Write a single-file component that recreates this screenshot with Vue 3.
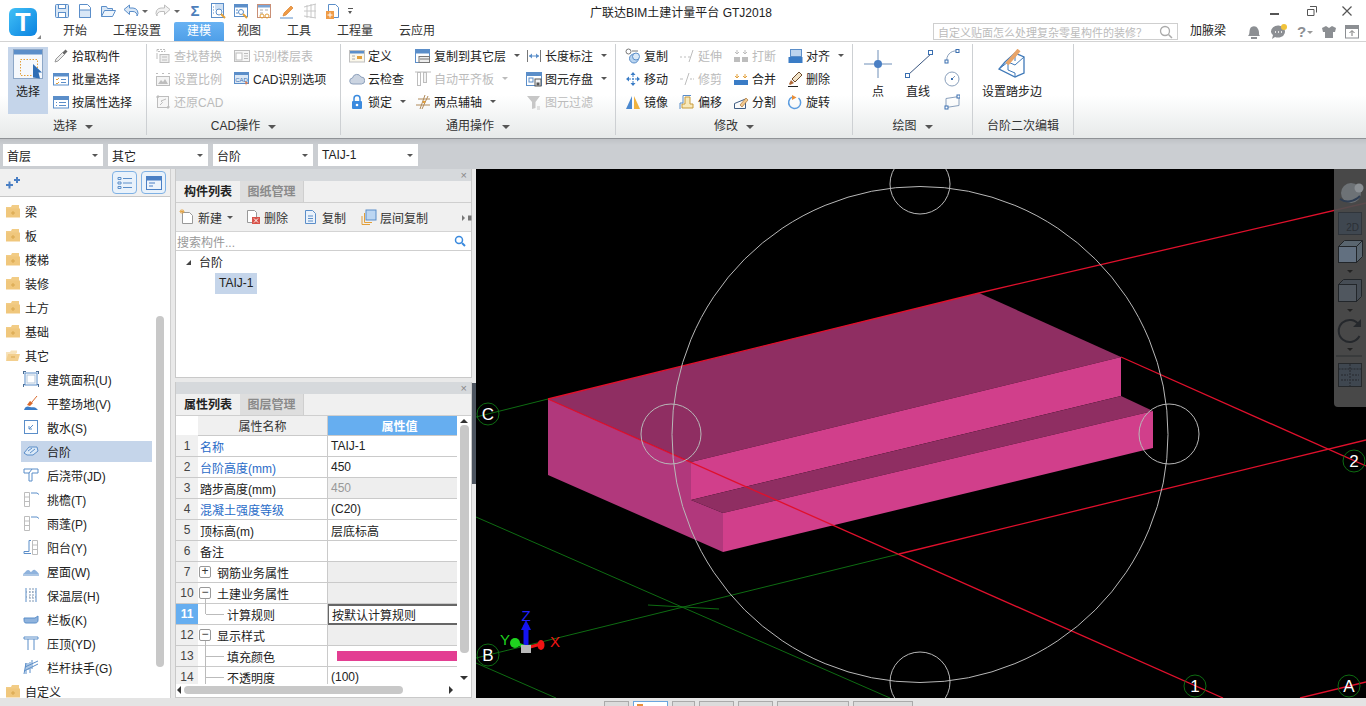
<script setup>
const S = '#5b8ec9'
const O = '#e3a03a'
const G = '#bdbdbd'

// 16x16 图标
const icons = {
  save: `<rect x="1.5" y="1.5" width="13" height="13" rx="1" fill="#d9e7f6" stroke="${S}"/><rect x="4.5" y="1.5" width="7" height="4" fill="#fff" stroke="${S}"/><rect x="4.5" y="9.5" width="7" height="5" fill="#fff" stroke="${S}"/>`,
  doc: `<path d="M2.5 1.5h8l3 3v10h-11z" fill="#fff" stroke="${S}"/><path d="M2.5 7h11v7.5h-11z" fill="#d9e7f6" stroke="${S}"/>`,
  open: `<path d="M1.5 13.5v-10h5l1 2h5v2" fill="#d9e7f6" stroke="${S}"/><path d="M1.5 13.5l3-6h11l-3 6z" fill="#eef5fc" stroke="${S}"/>`,
  undo: `<path d="M1 6.5l5.500-4.500v3h3.500a5 5 0 0 1 4 8 4 4 0 0 0-4-4.500h-3.500v3z" fill="#d9e7f6" stroke="${S}"/>`,
  redo: `<path d="M15 6.500l-5.500-4.500v3h-3.500a5 5 0 0 0-4 8 4 4 0 0 1 4-4.500h3.500v3z" fill="#f2f2f2" stroke="${G}"/>`,
  sigma: `<text x="8" y="13" font-size="15" font-weight="700" text-anchor="middle" fill="#4d7fbb" font-family="Liberation Sans">Σ</text>`,
  q1: `<rect x="1.500" y=".5" width="12" height="14" fill="#fff" stroke="${S}"/><rect x="5" y="1" width="8" height="6" fill="#cfe0f3"/><path d="M3 4h1M3 7h1M3 10h1" stroke="${S}"/><circle cx="9" cy="9" r="3" fill="#fff" stroke="${S}"/><path d="M11 11l4 4" stroke="${O}" stroke-width="2"/>`,
  q2: `<rect x="1.500" y="1.500" width="13" height="12" fill="#fff" stroke="${S}"/><rect x="2" y="2" width="12" height="2.500" fill="${S}"/><circle cx="8" cy="9" r="2.500" fill="#fff" stroke="${S}"/><path d="M10 11l4 4" stroke="${O}" stroke-width="2"/><path d="M3 7h2M3 10h2" stroke="${S}"/>`,
  q3: `<rect x="1.500" y="1.500" width="13" height="13" fill="#fff" stroke="#c98f76"/><rect x="2" y="2" width="12" height="2.500" fill="#7ba4d4"/><path d="M4 7h3M9 7h3M4 10h3" stroke="#aaa"/><circle cx="6" cy="13" r="2" fill="none" stroke="${O}"/><circle cx="11" cy="13" r="2" fill="none" stroke="${O}"/>`,
  pen: `<path d="M5 10l7-7 2 2-7 7-3 1z" fill="#ef9b47" stroke="#d9812c" stroke-width=".7"/><path d="M1 15h13" stroke="${S}"/>`,
  gridd: `<path d="M2 4l12-3M2 8h12M2 13l12 2M5 2v13M9 1v14M13 1v14" stroke="#c8c8c8" fill="none"/>`,
  docplus: `<path d="M3.500 1.500h7l3 3v10h-10z" fill="#fff" stroke="${S}"/><rect x="1" y="8" width="8" height="8" fill="#ef9b47"/><path d="M5 9.500v5M2.500 12h5" stroke="#fff"/>`,

  pick: `<path d="M2 14l1-3 6.500-6.500 2 2-6.500 6.500z" fill="#eee" stroke="#999"/><path d="M9.500 4.500l3-3 2 2-3 3z" fill="#666"/>`,
  batch: `<rect x=".5" y="2.500" width="15" height="11.500" fill="#fff" stroke="${S}"/><rect x="1" y="3" width="14" height="2.500" fill="${S}"/><path d="M3 8l1 1 2-2M3 12l1 1 2-2" stroke="${O}" fill="none"/><path d="M8 8.500h5M8 11.500h5" stroke="${S}"/>`,
  attr: `<rect x=".5" y="2.500" width="15" height="11.500" fill="#fff" stroke="${S}"/><rect x="1" y="3" width="14" height="3" fill="${S}"/><path d="M3 8.500h1M3 11.500h1" stroke="${S}"/><path d="M6 8.500h7M6 11.500h7" stroke="${S}"/>`,
  select: `<rect x=".5" y=".5" width="29" height="29" fill="#f5f8fc" stroke="#8da7c7"/><rect x="1" y="1" width="28" height="4.500" fill="#5b8ec9"/><rect x="7.500" y="10.500" width="17" height="16" fill="none" stroke="${O}" stroke-dasharray="1.500 1.500"/><path d="M20 15l9 8.500h-3.500l1.500 6-7-1z" fill="#2f6eb5"/>`,

  find: `<path d="M2 1.500h8v2H2z" fill="none" stroke="${G}" stroke-dasharray="2 1"/><rect x="5" y="6.500" width="9" height="8" fill="#eee" stroke="${G}"/><path d="M7 9h5M7 12h5M2 5v6" stroke="${G}"/>`,
  floor: `<rect x=".5" y="2.500" width="15" height="11" fill="#f6f6f6" stroke="${G}"/><rect x="2" y="5" width="6" height="7" fill="#fff" stroke="${G}"/><path d="M10 5.500h4M10 8h4M10 10.500h4" stroke="${G}"/>`,
  scale: `<path d="M1 2.500h2M7 2.500h2M13 2.500h2" stroke="${G}"/><rect x="1.500" y="5.500" width="13" height="9" fill="#f4f4f4" stroke="${G}"/><path d="M3 13l3-4 2 2 2-3 3 5z" fill="${G}"/>`,
  cadopt: `<rect x=".5" y="1.500" width="14" height="11" fill="#dbe8f6" stroke="${S}"/><rect x="1" y="2" width="13" height="2" fill="${S}"/><text x="7.500" y="10.500" font-size="6" text-anchor="middle" fill="#3a6fb0" font-family="Liberation Sans">CAD</text><path d="M11 10l3.500 2-2 .8-.5 2z" fill="#e27a4a"/>`,
  restore: `<rect x="2.500" y="2.500" width="11" height="11" fill="#f6f6f6" stroke="${G}"/><path d="M1 3h3M3 1v3M12 13h3M13 12v3" stroke="${G}"/><path d="M11 5L6 7l1.500 1.500L5 11" stroke="${G}" fill="none"/>`,

  define: `<rect x=".5" y="2.500" width="15" height="11.500" fill="#fbf7ea" stroke="#bfbfbf"/><rect x="1" y="3" width="14" height="2.500" fill="${S}"/><rect x="8" y="8" width="5" height="3" fill="${O}"/><path d="M3 8h3M3 11h3" stroke="#aaa"/>`,
  cloud: `<path d="M4 13a3 3 0 0 1-.5-6A4.500 4.500 0 0 1 12 6a3.500 3.500 0 0 1 .5 7z" fill="#cbd4e1" stroke="#8da0bb"/>`,
  lock: `<rect x="3" y="7" width="10" height="8" rx="1" fill="#3a8ade"/><path d="M5 7V4.500a3 3 0 0 1 6 0V7" fill="none" stroke="#3a8ade" stroke-width="1.500"/><circle cx="8" cy="11" r="1.300" fill="#fff"/>`,
  copyfl: `<rect x=".5" y="1.500" width="14" height="13" fill="#fff" stroke="${S}"/><rect x="1" y="2" width="13" height="3.500" fill="${S}"/><rect x="4" y="8.500" width="10.500" height="6" fill="#eee" stroke="#777"/><path d="M5 11h9" stroke="#777"/>`,
  align: `<rect x="2.500" y="1.500" width="3" height="13" fill="none" stroke="${G}"/><rect x="8.500" y="1.500" width="3" height="10" fill="#f2f2f2" stroke="${G}"/><path d="M0 1h16" stroke="${G}"/>`,
  twopt: `<path d="M1 11h14M3 5h12M10 1L5 15M13 2L7 15" stroke="#b08a5a" fill="none"/><circle cx="9" cy="8" r="1.300" fill="${O}"/>`,
  dim: `<path d="M1.500 2v12M14.500 2v12" stroke="#777"/><path d="M3 8h10" stroke="${S}"/><path d="M6 5.500L3 8l3 2.500zM10 5.500L13 8l-3 2.500z" fill="${S}"/>`,
  store: `<rect x=".5" y="1.500" width="15" height="13" fill="#fff" stroke="${S}"/><rect x="1" y="2" width="14" height="3" fill="${S}"/><rect x="3" y="7" width="4" height="4" fill="none" stroke="${S}"/><rect x="9" y="8" width="6" height="7" fill="#f4f4f4" stroke="#555"/><rect x="10.500" y="11.500" width="3" height="3" fill="#555"/>`,
  filter: `<path d="M1 2h13L9.500 8v6L6 15V8z" fill="#c7c7c7"/><path d="M11 13h3M11 15h3" stroke="#c7c7c7"/>`,

  copy: `<circle cx="3.500" cy="3.500" r="2.500" fill="#fff" stroke="#777"/><circle cx="9" cy="10.500" r="4.500" fill="#b9d4f0" stroke="${S}"/><circle cx="11" cy="8.500" r="3.500" fill="#dbe9f7" stroke="${S}"/><path d="M7 3h6" stroke="#777"/>`,
  move: `<path d="M8 1l2.500 3h-5zM8 15l2.500-3h-5zM1 8l3-2.500v5zM15 8l-3-2.500v5z" fill="#3a7cc6"/><path d="M4 8h8M8 4v8" stroke="#3a7cc6" stroke-dasharray="2 1"/>`,
  mirror: `<path d="M7 2v13H1z" fill="#4a88cf"/><path d="M9 2v13h6z" fill="#f0b23e"/>`,
  extend: `<path d="M1 9h2M5 9h2" stroke="${G}"/><path d="M9 9h2M14 2l-4 12" stroke="${G}" fill="none"/>`,
  trim: `<path d="M1 8h3M11 8h2M14 8h1" stroke="${G}"/><path d="M10 2L6 14" stroke="${G}"/>`,
  offset: `<path d="M3 14v-4h3V3h5v7h3v4z" fill="#f8e9bb" stroke="#c89b3c"/><path d="M1 15V9h3V1.500h8" fill="none" stroke="${S}"/>`,
  brk: `<path d="M1 7h5v-2H1zM9 7h5v-2H9z" fill="#fff"/><rect x="1" y="9" width="6" height="5" fill="${G}"/><rect x="9" y="9" width="6" height="5" fill="${G}"/><path d="M4 2v4M2 4l2 2 2-2M12 2v4M10 4l2 2 2-2" stroke="${G}" fill="none"/>`,
  merge: `<rect x="1" y="9" width="14" height="5" fill="#3a7cc6"/><path d="M4 3v4M2 5l2 2 2-2M12 3v4M10 5l2 2 2-2" stroke="${O}" fill="none"/>`,
  split: `<path d="M1.500 9.500l11-4.500v9.500h-11z" fill="none" stroke="#3e5c82"/><path d="M7 11l6-7 2 2-6 7z" fill="#f3c98f" stroke="#a7763a" stroke-width=".7"/>`,
  alignr: `<rect x="1.500" y="9" width="14" height="6" fill="#3a7cc6"/><rect x="3.500" y="1.500" width="11" height="7" fill="#bcd4ee" stroke="${S}"/>`,
  erase: `<path d="M2 13l2-4 3 3-4 2z" fill="#b06a3a"/><path d="M5 8l7-7 3 3-7 7z" fill="#f1e2c7" stroke="#6b4a2c"/><path d="M1 15.500h10" stroke="#222"/>`,
  rotate: `<path d="M11.500 4A6 6 0 1 1 5 3.200" fill="none" stroke="#5c9de0" stroke-width="1.500"/><path d="M5 1l4.500 2.500L5 6z" fill="#e88f3a"/>`,

  point: `<path d="M15 1v28M1 15h28" stroke="#6e8fb8"/><circle cx="15" cy="15" r="4" fill="#4a7fc4"/>`,
  line: `<path d="M5 26L29 4" stroke="#3a5680"/><rect x="2.500" y="24.500" width="4" height="4" fill="#fff" stroke="#3a6fb0"/><rect x="25.500" y="1.500" width="4" height="4" fill="#fff" stroke="#3a6fb0"/>`,
  arc: `<path d="M3 14A9 9 0 0 1 13 3" fill="none" stroke="#8aa0bc"/><rect x="1" y="12" width="3" height="3" fill="#fff" stroke="#3a6fb0"/><rect x="12" y="1.500" width="3" height="3" fill="#fff" stroke="#3a6fb0"/>`,
  circle: `<circle cx="8" cy="8" r="7" fill="none" stroke="#8aa0bc"/><path d="M8 8l3-3" stroke="#8aa0bc"/><rect x="7" y="7" width="2" height="2" fill="#3a6fb0"/>`,
  rect: `<path d="M2 4.500l13-2v9l-13 2z" fill="none" stroke="#8aa0bc"/><rect x="1" y="12" width="3" height="3" fill="#fff" stroke="#3a6fb0"/><rect x="13" y="1" width="3" height="3" fill="#fff" stroke="#3a6fb0"/>`,
  stepset: `<path d="M8 13l10-9 9 4v16l-9 4L2 20z" fill="#fff" stroke="#3f79b8" stroke-width="1.300"/><path d="M2 20l9-7 7 3 9-8M11 13v8l7 3v4M18 4v8" fill="none" stroke="#3f79b8"/><path d="M10 15L22 1" stroke="#e8a468" stroke-width="4"/>`,

  // 树
  folder: `<path d="M1 4h5l1-2h7v11H1z" fill="#f2cc85"/><path d="M1 5.500h14v9H1z" fill="#f0c77c"/><path d="M8 8v4M6 10h4" stroke="#d9a74e"/>`,
  folderopen: `<path d="M1 13V5h4l1-1.500h6V6" fill="#f7e2ba"/><path d="M1 14l2-7h12l-2 7z" fill="#f3cf8e"/><path d="M6 10h4" stroke="#d9a74e"/>`,
  area: `<path d="M0 .5h3M0 13.500h3M13 .5h3M13 13.500h3M.5 0v3M.5 13v3M15.500 0v3M15.500 13v3" stroke="#4b6d94"/><rect x="2" y="2" width="12" height="12" fill="#fff" stroke="${S}"/><rect x="4" y="4" width="8" height="8" fill="#fff" stroke="#b4c7dc"/>`,
  level: `<path d="M1 15c1-4 4-4 6-3s5-1 8 3z" fill="#3a7cc6"/><path d="M4 10l3-4 3 2-3 3z" fill="#d9692b"/><path d="M9 7l5-6" stroke="#d9692b"/>`,
  apron: `<rect x="1.500" y="1.500" width="13" height="13" fill="#fff" stroke="${S}"/><path d="M10 6L6 10M6 7v3h3" fill="none" stroke="${S}"/>`,
  stair: `<path d="M1 10l5-6 8 0 1 4-5 4-6 0z" fill="#dbe9f7" stroke="${S}"/><path d="M5 8l4-3M7 10l5-4" stroke="${S}"/>`,
  jd: `<path d="M1 2h14v4H9v8H6V6H1z" fill="#fff" stroke="${S}"/><path d="M6 6l3-4" stroke="${S}"/>`,
  eave: `<path d="M1.500 1.500h5v14h-5zM1.500 6h5M1.500 10.500h5" fill="#fff" stroke="${G}"/><path d="M8 2h6l2 1.500" fill="none" stroke="${S}"/>`,
  balcony: `<path d="M9.500 1.500h5v14h-5zM9.500 6h5M9.500 10.500h5" fill="#fff" stroke="${G}"/><path d="M8 1.500H6v11H1v2h7" fill="none" stroke="${S}"/>`,
  roof: `<path d="M0 11c2-1 3-4 5-4s2 2 3 2 2-3 4-2 3 3 4 4z" fill="#8fb3dd"/><path d="M0 12h16" stroke="${S}"/>`,
  insul: `<path d="M3 1v14M13 1v14" stroke="${S}"/><path d="M7 1v14M10 1v14" stroke="#7f95b0" stroke-dasharray="2 1"/><path d="M3 5h10M3 10h10" stroke="#7f95b0" stroke-dasharray="1 2"/>`,
  rail: `<path d="M1 7h11l3-2v4c0 2-1 3-3 3H3c-2 0-2-2-2-5z" fill="#8fb3dd" stroke="${S}"/>`,
  coping: `<path d="M1 2h14v2H1zM5 4v11M11 4v11" fill="#fff" stroke="${S}"/>`,
  handrail: `<path d="M1 15l2-11v11M5 11V4M7 14V3M9 10V1M1 12l14-7M2 8l13-6" fill="none" stroke="${S}"/>`,

  // 构件工具栏
  add: `<path d="M3.500 3.500h7l3 3v8h-10z" fill="#fff" stroke="#999"/><path d="M3 0v5M0.500 2.500h5M1 1l4 3M5 1L1 4" stroke="${O}" stroke-width=".8"/>`,
  del: `<path d="M2.500 1.500h7l2 2v10h-9z" fill="#fff" stroke="#999"/><rect x="7" y="8" width="8" height="7" fill="#d8534a"/><path d="M9 9.500l4 4M13 9.500l-4 4" stroke="#fff"/>`,
  dup: `<path d="M2.500 1.500h7l3 3v10h-10z" fill="#eaf2fb" stroke="${S}"/><path d="M5 7h5M5 9.500h5M5 12h5" stroke="${S}"/>`,
  floorcopy: `<rect x="5" y="1" width="10" height="10" fill="#bcd6f2" stroke="${S}"/><path d="M3.500 4v9.500H11M1 7v8.500h8" fill="none" stroke="${O}"/>`
}

const groups = [
  {
    label: '选择', cls: 'g1', caret: true,
    bigs: [{ icon: 'select', text: '选择', active: true }],
    cols: [{
      w: 'w90',
      items: [{ icon: 'pick', text: '拾取构件' }, { icon: 'batch', text: '批量选择' }, { icon: 'attr', text: '按属性选择' }]
    }]
  },
  {
    label: 'CAD操作', cls: 'g2', caret: true, bigs: [],
    cols: [
      { w: 'w79', items: [{ icon: 'find', text: '查找替换', off: true }, { icon: 'scale', text: '设置比例', off: true }, { icon: 'restore', text: '还原CAD', off: true }] },
      { w: 'w100', items: [{ icon: 'floor', text: '识别楼层表', off: true }, { icon: 'cadopt', text: 'CAD识别选项' }] }
    ]
  },
  {
    label: '通用操作', cls: 'g3', caret: true, bigs: [],
    cols: [
      { w: 'w66', items: [{ icon: 'define', text: '定义' }, { icon: 'cloud', text: '云检查' }, { icon: 'lock', text: '锁定', more: true }] },
      { w: 'w111', items: [{ icon: 'copyfl', text: '复制到其它层', more: true }, { icon: 'align', text: '自动平齐板', off: true, more: true }, { icon: 'twopt', text: '两点辅轴', more: true }] },
      { w: 'w85', items: [{ icon: 'dim', text: '长度标注', more: true }, { icon: 'store', text: '图元存盘', more: true }, { icon: 'filter', text: '图元过滤', off: true }] }
    ]
  },
  {
    label: '修改', cls: 'g4', caret: true, bigs: [],
    cols: [
      { w: 'w54', items: [{ icon: 'copy', text: '复制' }, { icon: 'move', text: '移动' }, { icon: 'mirror', text: '镜像' }] },
      { w: 'w54', items: [{ icon: 'extend', text: '延伸', off: true }, { icon: 'trim', text: '修剪', off: true }, { icon: 'offset', text: '偏移' }] },
      { w: 'w54', items: [{ icon: 'brk', text: '打断', off: true }, { icon: 'merge', text: '合并' }, { icon: 'split', text: '分割' }] },
      { w: 'w60', items: [{ icon: 'alignr', text: '对齐', more: true }, { icon: 'erase', text: '删除' }, { icon: 'rotate', text: '旋转' }] }
    ]
  },
  {
    label: '绘图', cls: 'g5', caret: true,
    bigs: [{ icon: 'point', text: '点' }, { icon: 'line', text: '直线' }],
    cols: [{ w: 'w18', items: [{ icon: 'arc' }, { icon: 'circle' }, { icon: 'rect' }] }]
  },
  {
    label: '台阶二次编辑', cls: 'g6', caret: false,
    bigs: [{ icon: 'stepset', text: '设置踏步边', wide: true }],
    cols: []
  }
]

const quick = ['save', 'doc', 'open', 'undo', 'c', 'redo', 'c', 'sigma', 'q1', 'q2', 'q3', 'pen', 'gridd', 'docplus']
const tabs = ['开始', '工程设置', '建模', '视图', '工具', '工程量', '云应用']
const combos = ['首层', '其它', '台阶', 'TAIJ-1']

const tree = [
  { icon: 'folder', text: '梁' }, { icon: 'folder', text: '板' }, { icon: 'folder', text: '楼梯' },
  { icon: 'folder', text: '装修' }, { icon: 'folder', text: '土方' }, { icon: 'folder', text: '基础' },
  { icon: 'folderopen', text: '其它' },
  { icon: 'area', text: '建筑面积(U)', sub: true }, { icon: 'level', text: '平整场地(V)', sub: true },
  { icon: 'apron', text: '散水(S)', sub: true }, { icon: 'stair', text: '台阶', sub: true, on: true },
  { icon: 'jd', text: '后浇带(JD)', sub: true }, { icon: 'eave', text: '挑檐(T)', sub: true },
  { icon: 'eave', text: '雨蓬(P)', sub: true }, { icon: 'balcony', text: '阳台(Y)', sub: true },
  { icon: 'roof', text: '屋面(W)', sub: true }, { icon: 'insul', text: '保温层(H)', sub: true },
  { icon: 'rail', text: '栏板(K)', sub: true }, { icon: 'coping', text: '压顶(YD)', sub: true },
  { icon: 'handrail', text: '栏杆扶手(G)', sub: true }, { icon: 'folder', text: '自定义' }
]

const tools = [
  { icon: 'add', text: '新建', more: true }, { icon: 'del', text: '删除' },
  { icon: 'dup', text: '复制' }, { icon: 'floorcopy', text: '层间复制' }
]

const rows = [
  { n: '1', name: '名称', val: 'TAIJ-1', blue: true },
  { n: '2', name: '台阶高度(mm)', val: '450', blue: true },
  { n: '3', name: '踏步高度(mm)', val: '450', shade: true, dim: true },
  { n: '4', name: '混凝土强度等级', val: '(C20)', blue: true },
  { n: '5', name: '顶标高(m)', val: '层底标高' },
  { n: '6', name: '备注', val: '' },
  { n: '7', name: '钢筋业务属性', val: '', shade: true, box: '+' },
  { n: '10', name: '土建业务属性', val: '', shade: true, box: '−', open: true },
  { n: '11', name: '计算规则', val: '按默认计算规则', child: 'last', edit: true, cur: true },
  { n: '12', name: '显示样式', val: '', shade: true, box: '−', open: true },
  { n: '13', name: '填充颜色', val: '', child: 'mid', swatch: true },
  { n: '14', name: '不透明度', val: '(100)', child: 'mid' }
]

const bottomTabs = [25, 35, 23, 35, 35, 72, 60]

// 画布上的轴号
const axisMarks = [
  { t: 'C', x: 488, y: 414 }, { t: '2', x: 1354, y: 461 }, { t: '1', x: 1195, y: 686 },
  { t: 'A', x: 1349, y: 686 }, { t: 'B', x: 488, y: 655 }
]
const rims = [[920, 184], [671, 434], [1169, 434], [920, 682]]
</script>

<template>
  <div class="app">
    <header class="top">
      <div class="logo-cell">
        <div class="logo">T</div>
        <i class="logo-mark"></i>
      </div>
      <div class="top-main">
        <div class="row-a">
          <div class="quick">
            <template v-for="(q, i) in quick" :key="i">
              <i v-if="q === 'c'" class="qcaret"></i>
              <svg v-else class="i16" viewBox="0 0 16 16" v-html="icons[q]"></svg>
            </template>
            <span class="qmenu"></span>
          </div>
          <div class="title">广联达BIM土建计量平台 GTJ2018</div>
          <div class="win">
            <svg width="12" height="12" viewBox="0 0 12 12"><path d="M1 9h9" stroke="#555" stroke-width="2" /></svg>
            <svg width="12" height="12" viewBox="0 0 12 12"><path d="M4 1.500h6.500v6M1.500 4.500h6.500v6H1.500z" fill="#fff" stroke="#555" /></svg>
            <svg width="12" height="12" viewBox="0 0 12 12"><path d="M1.500 1.500l9 9M10.500 1.500l-9 9" stroke="#555" stroke-width="1.200" /></svg>
          </div>
        </div>
        <div class="row-b">
          <nav class="tabs">
            <span v-for="t in tabs" :key="t" class="tab" :class="{ 'tab--on': t === '建模' }">{{ t }}</span>
          </nav>
          <div class="search">
            <span>自定义贴面怎么处理复杂零星构件的装修？</span>
            <svg width="14" height="14" viewBox="0 0 14 14"><circle cx="6" cy="6" r="4.500" fill="none" stroke="#aaa" stroke-width="1.300" /><path d="M9.500 9.500l3.500 3.500" stroke="#aaa" stroke-width="1.500" /></svg>
          </div>
          <span class="hint">加腋梁</span>
          <div class="tray">
            <svg width="14" height="16" viewBox="0 0 14 16"><path d="M1 12c2-2 1-4 2-7s6-4 8 0 0 5 2 7z" fill="#8c8f93" /><rect x="4" y="13" width="6" height="2" fill="#8c8f93" /></svg>
            <svg width="18" height="16" viewBox="0 0 18 16"><path d="M1 8a7 6 0 1 1 4 5l-3 2 1-4a6 6 0 0 1-2-3z" fill="#8c8f93" /><path d="M5 8h1M8 8h1M11 8h1" stroke="#fff" stroke-width="1.500" /><circle cx="14" cy="3" r="3" fill="#f0c23a" /></svg>
            <span class="help">?<i></i></span>
            <svg width="14" height="14" viewBox="0 0 14 14"><path d="M4 1L0 3l1 4h2v6h8V7h2l1-4-4-2-3 2z" fill="#8c8f93" /></svg>
            <svg width="14" height="14" viewBox="0 0 14 14"><rect x=".5" y=".5" width="13" height="12.500" fill="#fff" stroke="#8c8f93" /><rect x="1" y="1" width="12" height="3" fill="#8c8f93" /><path d="M7 11V6M4.500 8L7 5.500 9.500 8" fill="none" stroke="#777" /></svg>
          </div>
        </div>
      </div>
    </header>

    <section class="ribbon">
      <div v-for="g in groups" :key="g.label" class="group" :class="g.cls">
        <div class="group-body">
          <div v-for="b in g.bigs" :key="b.text" class="big" :class="{ 'big--on': b.active, 'big--wide': b.wide }">
            <svg class="i30" viewBox="0 0 30 30" v-html="icons[b.icon]"></svg>
            <span>{{ b.text }}</span>
          </div>
          <div v-for="(c, ci) in g.cols" :key="ci" class="col" :class="c.w">
            <div v-for="(it, ii) in c.items" :key="ii" class="item" :class="{ 'item--off': it.off }">
              <svg class="i16" viewBox="0 0 16 16" v-html="icons[it.icon]"></svg>
              <span v-if="it.text">{{ it.text }}</span>
              <i v-if="it.more" class="caret"></i>
            </div>
          </div>
        </div>
        <div class="group-label">{{ g.label }}<i v-if="g.caret" class="caret caret--lg"></i></div>
      </div>
    </section>

    <section class="picker">
      <div v-for="c in combos" :key="c" class="combo">
        <span>{{ c }}</span>
        <i class="caret"></i>
      </div>
    </section>

    <main class="work">
      <aside class="nav">
        <div class="nav-bar">
          <svg class="i16" viewBox="0 0 16 16"><path d="M1 10h7M4.500 6.500v7M9 5h6M12 2v6" stroke="#4a7fc4" stroke-width="2" /></svg>
          <span class="nav-btns">
            <span class="nav-btn">
              <svg class="i16" viewBox="0 0 16 16"><path d="M1 2.500h3v2H1zM1 7h3v2H1zM1 11.500h3v2H1z" fill="none" stroke="#5b8ec9" /><path d="M6 3.500h9M6 8h9M6 12.500h9" stroke="#5b8ec9" /></svg>
            </span>
            <span class="nav-btn">
              <svg class="i16" viewBox="0 0 16 16"><rect x=".5" y="1.500" width="15" height="13" fill="#eef4fb" stroke="#4a7fc4" /><rect x="1" y="2" width="14" height="3.500" fill="#4a7fc4" /><path d="M3 8h6M3 11h4" stroke="#4a7fc4" /></svg>
            </span>
          </span>
        </div>
        <div class="nav-tree">
          <div v-for="n in tree" :key="n.text" class="node" :class="{ 'node--sub': n.sub, 'node--on': n.on }">
            <svg class="i16" viewBox="0 0 16 16" v-html="icons[n.icon]"></svg>
            <span>{{ n.text }}</span>
          </div>
          <i class="nav-thumb"></i>
        </div>
      </aside>

      <div class="mid">
        <div class="panels">
          <section class="panel panel--list">
            <div class="panel-head">×</div>
            <div class="panel-tabs">
              <span class="ptab ptab--on">构件列表</span>
              <span class="ptab">图纸管理</span>
            </div>
            <div class="ptools">
              <span v-for="t in tools" :key="t.text" class="ptool">
                <svg class="i16" viewBox="0 0 16 16" v-html="icons[t.icon]"></svg>
                {{ t.text }}
                <i v-if="t.more" class="caret"></i>
              </span>
              <span class="pmore"></span>
            </div>
            <div class="psearch">
              <span>搜索构件...</span>
              <svg width="12" height="12" viewBox="0 0 12 12"><circle cx="5" cy="5" r="3.500" fill="none" stroke="#3a8ade" stroke-width="1.500" /><path d="M8 8l3 3" stroke="#3a8ade" stroke-width="2" /></svg>
            </div>
            <div class="ptree">
              <div class="pt-root"><i></i>台阶</div>
              <div class="pt-leaf"><span>TAIJ-1</span></div>
            </div>
          </section>

          <section class="panel panel--props">
            <div class="panel-head">×</div>
            <div class="panel-tabs">
              <span class="ptab ptab--on">属性列表</span>
              <span class="ptab">图层管理</span>
            </div>
            <div class="props">
              <div class="table">
                <div class="tr tr--head">
                  <span class="cell cell--no cell--blank"></span>
                  <span class="cell cell--hname">属性名称</span>
                  <span class="cell cell--hval">属性值</span>
                </div>
                <div v-for="r in rows" :key="r.n" class="tr">
                  <span class="cell cell--no" :class="{ 'cell--cur': r.cur }">{{ r.n }}</span>
                  <span class="cell cell--name" :class="{ 'is-blue': r.blue, 'has-box': r.box, 'is-child': r.child, 'is-open': r.open, 'is-last': r.child === 'last' }">
                    <i v-if="r.box" class="box">{{ r.box }}</i>{{ r.name }}
                  </span>
                  <span class="cell cell--val" :class="{ 'is-shade': r.shade, 'is-dim': r.dim, 'is-edit': r.edit }">
                    <i v-if="r.swatch" class="swatch"></i>{{ r.val }}
                  </span>
                </div>
              </div>
              <div class="vbar">
                <i class="arr arr--up"></i>
                <i class="vthumb"></i>
                <i class="arr arr--down"></i>
              </div>
            </div>
            <div class="hbar">
              <i class="arr arr--left"></i>
              <i class="hthumb"></i>
              <i class="arr arr--right"></i>
            </div>
          </section>
        </div>
        <div class="gutter"><i class="handle"></i></div>
      </div>

      <div class="canvas">
        <svg class="scene" viewBox="476 169 890 529">
          <g fill="none" stroke="#0e6c12">
            <path d="M476 417L548 399" />
            <path d="M476 517L890 698" />
            <path d="M476 663L556 698" />
            <path d="M476 658L899 554" />
            <path d="M648 605L719 609" />
          </g>
          <polygon points="548,399 979,293 1121,357 691,462" fill="#8f2e62" />
          <polygon points="691,462 1121,357 1121,396 691,500" fill="#d13f8b" />
          <polygon points="691,500 1121,396 1153,411 723,513" fill="#8f2e62" />
          <polygon points="723,513 1153,411 1153,448 723,552" fill="#d13f8b" />
          <polygon points="548,399 691,462 691,500 723,513 723,552 548,475" fill="#b1387c" />
          <g fill="none" stroke="#e0102c" stroke-width="1.300">
            <path d="M548 399L979 293L1366 203" />
            <path d="M548 399L1223 698" />
            <path d="M1121 357L1366 466" />
            <path d="M899 554L1366 440" />
            <path d="M1300 698L1366 682" />
          </g>
          <g fill="none" stroke="#b8b8b8">
            <circle cx="920" cy="434.500" r="248" />
            <circle v-for="r in rims" :key="r[0] + '-' + r[1]" :cx="r[0]" :cy="r[1]" r="30" />
          </g>
          <g v-for="m in axisMarks" :key="m.t">
            <circle :cx="m.x" :cy="m.y" r="11" fill="none" stroke="#0e6c12" />
            <text :x="m.x" :y="m.y + 6" class="mark">{{ m.t }}</text>
          </g>
          <!-- 坐标轴 -->
          <path d="M526 625v20" stroke="#1414f0" stroke-width="5" />
          <path d="M526 620l-5 10h10z" fill="#1414f0" />
          <path d="M515 643L526 647" stroke="#1fd41f" stroke-width="3" />
          <circle cx="515" cy="643" r="5" fill="#1fd41f" />
          <path d="M530 647L541 644" stroke="#f01414" stroke-width="3" />
          <ellipse cx="541" cy="645" rx="3.500" ry="5" fill="#f01414" />
          <rect x="521" y="645" width="10" height="8" fill="#b9b9b9" />
          <text x="526" y="621" class="axis axis--z">Z</text>
          <text x="505" y="645" class="axis axis--y">Y</text>
          <text x="555" y="647" class="axis axis--x">X</text>
        </svg>

        <div class="viewbar">
          <svg width="32" height="238" viewBox="0 0 32 238">
            <circle cx="17" cy="24" r="10" fill="#6d7276" />
            <circle cx="25" cy="19" r="4.500" fill="#8a8f93" />
            <path d="M6 30c6 4 14 3 20-3" fill="none" stroke="#2e3d52" stroke-width="2" />
            <rect x="4.500" y="43.500" width="23" height="22" fill="#3f4750" stroke="#30353b" />
            <text x="25" y="62" class="bar-text">2D</text>
            <path d="M4.500 77.500l6-6h18v16l-6 6h-18z" fill="#5a6670" stroke="#22262a" />
            <rect x="4.500" y="77.500" width="18" height="16" fill="#627080" stroke="#22262a" />
            <path d="M22.500 77.500l6-6" stroke="#22262a" />
            <path d="M13 101l3 3 3-3z" fill="#222" />
            <path d="M4.500 115.500l5-5h18v17l-5 5h-18z" fill="#464d55" stroke="#22262a" />
            <rect x="4.500" y="115.500" width="18" height="17" fill="#50575f" stroke="#22262a" />
            <path d="M13 140l3 3 3-3z" fill="#222" />
            <path d="M25 156a11 11 0 1 0 .5 11" fill="none" stroke="#25282c" stroke-width="2" />
            <path d="M27 150v8h-8z" fill="#25282c" />
            <path d="M13 179l3 3 3-3z" fill="#222" />
            <path d="M2 187h26" stroke="#2b2e31" />
            <rect x="4.500" y="194.500" width="23" height="23" fill="#3f4750" stroke="#26292c" />
            <path d="M4.500 200h23M16 195v22M7 206h7M18 206h7M7 211h7M18 211h7" stroke="#26292c" stroke-dasharray="2 1" />
          </svg>
        </div>
      </div>
    </main>

    <footer class="bottom">
      <span v-for="(w, i) in bottomTabs" :key="i" class="btab" :class="{ 'btab--on': i === 1 }" :style="{ width: w + 'px' }"></span>
    </footer>
  </div>
</template>

<style>
html, body {
  margin: 0;
  height: 100%;
  overflow: hidden;
  background: #e4e4e4;
}
</style>

<style scoped>
.app {
  width: 1366px;
  height: 706px;
  display: flex;
  flex-direction: column;
  overflow: hidden;
  font-family: "Liberation Sans", "Noto Sans CJK SC", sans-serif;
  font-size: 12px;
  color: #222;
}

i {
  font-style: normal;
}

.i16 {
  width: 16px;
  height: 16px;
  flex: none;
  display: block;
}

.i30 {
  width: 30px;
  height: 30px;
  flex: none;
  display: block;
}

.caret {
  display: inline-block;
  margin-left: 5px;
  border-left: 3px solid transparent;
  border-right: 3px solid transparent;
  border-top: 3px solid #555;
}

.caret--lg {
  margin-left: 8px;
  border-left-width: 4px;
  border-right-width: 4px;
  border-top-width: 4px;
  vertical-align: 1px;
}

/* 标题区 */
.top {
  height: 42px;
  flex: none;
  display: flex;
  background: #fff;
  border-bottom: 1px solid #d3d3d3;
  box-sizing: border-box;
}

.logo-cell {
  width: 49px;
  flex: none;
  position: relative;
  padding: 8px 0 0 9px;
  box-sizing: border-box;
}

.logo {
  width: 28px;
  height: 28px;
  border-radius: 6px;
  background: linear-gradient(135deg, #41c0f6, #0a82e0);
  color: #fff;
  font-size: 25px;
  font-weight: 700;
  line-height: 28px;
  text-align: center;
}

.logo-mark {
  position: absolute;
  left: 37px;
  top: 35px;
  border-left: 4px solid transparent;
  border-bottom: 4px solid #888;
}

.top-main {
  flex: 1;
  display: flex;
  flex-direction: column;
}

.row-a {
  height: 22px;
  display: flex;
  align-items: center;
}

.quick {
  width: 541px;
  flex: none;
  box-sizing: border-box;
  padding-left: 5px;
  display: flex;
  align-items: center;
  gap: 7px;
}

.qcaret {
  margin-left: -4px;
  width: 0;
  border-left: 3px solid transparent;
  border-right: 3px solid transparent;
  border-top: 3px solid #666;
}

.qmenu {
  width: 5px;
  height: 5px;
  margin-left: 0;
  border-top: 1px solid #555;
  position: relative;
}

.qmenu::after {
  content: "";
  position: absolute;
  left: 0;
  top: 2px;
  border-left: 2.500px solid transparent;
  border-right: 2.500px solid transparent;
  border-top: 3px solid #555;
}

.title {
  flex: none;
  font-size: 12px;
  color: #222;
}

.win {
  margin-left: auto;
  display: flex;
  gap: 23px;
  padding-right: 13px;
  align-items: center;
}

.win svg:first-child {
  margin-right: 2px;
}

.row-b {
  height: 19px;
  display: flex;
  align-items: stretch;
}

.tabs {
  display: flex;
  width: 883px;
  margin-left: 1px;
  flex: none;
}

.tab {
  padding: 0 13px;
  line-height: 19px;
  font-size: 12px;
  color: #333;
}

.tab--on {
  background: linear-gradient(#68b2f3, #4f9fe8);
  color: #fff;
  border-radius: 2px 2px 0 0;
}

.search {
  width: 245px;
  height: 17px;
  margin-top: 1px;
  flex: none;
  box-sizing: border-box;
  border: 1px solid #cfcfcf;
  display: flex;
  align-items: center;
  justify-content: space-between;
  padding: 0 4px;
  font-size: 11px;
  color: #bbb;
  white-space: nowrap;
}

.hint {
  margin-left: 12px;
  line-height: 19px;
  color: #222;
}

.tray {
  margin-left: auto;
  padding-right: 7px;
  display: flex;
  align-items: center;
  gap: 9px;
}

.help {
  color: #8c8f93;
  font-size: 15px;
  font-weight: 700;
  width: 16px;
  position: relative;
}

.help i {
  position: absolute;
  left: 10px;
  top: 8px;
  border-left: 3px solid transparent;
  border-right: 3px solid transparent;
  border-top: 3px solid #999;
}

/* 功能区 */
.ribbon {
  height: 97px;
  flex: none;
  box-sizing: border-box;
  display: flex;
  background: linear-gradient(#fff 55%, #e7eaea);
  border-bottom: 1px solid #8f9296;
}

.group {
  margin: 2px 0 3px;
  border-right: 1px solid #cdd0d3;
  box-sizing: border-box;
  display: flex;
  flex-direction: column;
}

.g1 { width: 147px; }
.g2 { width: 194px; }
.g3 { width: 275px; }
.g4 { width: 237px; }
.g5 { width: 120px; }
.g6 { width: 101px; }

.group-body {
  flex: 1;
  display: flex;
  padding-left: 8px;
}

.g4 .group-body { padding-left: 9px; }
.g5 .group-body { padding-left: 5px; }
.g6 .group-body { padding-left: 0; }

.group-label {
  height: 20px;
  line-height: 22px;
  text-align: center;
  color: #333;
  white-space: nowrap;
}

.big {
  width: 40px;
  height: 67px;
  margin-top: 3px;
  box-sizing: border-box;
  padding-top: 2px;
  display: flex;
  flex-direction: column;
  align-items: center;
  gap: 3px;
  white-space: nowrap;
}

.big--on {
  background: #c5d5ea;
  margin-right: 5px;
}

.big--wide {
  width: 78px;
}

.col {
  display: flex;
  flex-direction: column;
}

.w18 { width: 18px; margin-left: 6px; }
.w54 { width: 54px; }
.w60 { width: 60px; }
.w66 { width: 66px; }
.w79 { width: 79px; }
.w85 { width: 85px; }
.w90 { width: 90px; }
.w100 { width: 100px; }
.w111 { width: 111px; }

.item {
  height: 23px;
  display: flex;
  align-items: center;
  gap: 3px;
  white-space: nowrap;
}

.item--off {
  color: #bbb;
}

.item--off .caret {
  border-top-color: #bbb;
}

/* 楼层 / 构件选择条 */
.picker {
  height: 30px;
  flex: none;
  box-sizing: border-box;
  padding: 5px 0 3px 3px;
  display: flex;
  gap: 5px;
  background: linear-gradient(#bfc2c6, #cbced2 20%);
}

.combo {
  width: 100px;
  box-sizing: border-box;
  background: #fff;
  padding: 0 5px 0 4px;
  display: flex;
  align-items: center;
  justify-content: space-between;
}

/* 主体 */
.work {
  flex: 1;
  min-height: 0;
  display: flex;
}

.nav {
  width: 171px;
  flex: none;
  box-sizing: border-box;
  background: #fff;
  border-right: 1px solid #cfcfcf;
  display: flex;
  flex-direction: column;
}

.nav-bar {
  height: 28px;
  flex: none;
  box-sizing: border-box;
  background: #f0f0f0;
  border-bottom: 1px solid #c8c8c8;
  padding: 0 4px 0 5px;
  display: flex;
  align-items: center;
  justify-content: space-between;
}

.nav-btns {
  display: flex;
  gap: 4px;
}

.nav-btn {
  width: 25px;
  height: 23px;
  box-sizing: border-box;
  border: 1px solid #7fb1e4;
  border-radius: 4px;
  background: #e9f2fb;
  display: flex;
  align-items: center;
  justify-content: center;
}

.nav-tree {
  flex: 1;
  min-height: 0;
  overflow: hidden;
  position: relative;
  padding-top: 2px;
}

.node {
  height: 24px;
  display: flex;
  align-items: center;
  gap: 4px;
  padding-left: 5px;
  white-space: nowrap;
}

.node--sub {
  padding-left: 23px;
  gap: 8px;
  position: relative;
}

.node--on::before {
  content: "";
  position: absolute;
  left: 21px;
  top: 2px;
  width: 131px;
  height: 21px;
  background: #c5d5ea;
  z-index: 0;
}

.node--on > * {
  position: relative;
}

.nav-thumb {
  position: absolute;
  left: 156px;
  top: 119px;
  width: 8px;
  height: 351px;
  background: #c8c8c8;
  border-radius: 4px;
}

.mid {
  width: 305px;
  flex: none;
  display: flex;
  background: #e9e9e9;
}

.panels {
  width: 301px;
  flex: none;
  box-sizing: border-box;
  padding-left: 4px;
  display: flex;
  flex-direction: column;
  gap: 4px;
}

.panel {
  display: flex;
  flex-direction: column;
  box-sizing: border-box;
  border: 1px solid #c9c9c9;
  border-top: none;
  background: #fff;
}

.panel--list {
  height: 209px;
  flex: none;
}

.panel--props {
  height: 316px;
  flex: none;
  background: #efefef;
}

.panel-head {
  height: 12px;
  flex: none;
  background: #d6d9dc;
  color: #888;
  font-size: 11px;
  line-height: 12px;
  text-align: right;
  padding-right: 4px;
}

.panel-tabs {
  height: 22px;
  flex: none;
  display: flex;
  background: #f0f0f0;
  border-bottom: 1px solid #cfcfcf;
  box-sizing: border-box;
}

.ptab {
  width: 64px;
  text-align: center;
  line-height: 23px;
  font-weight: 700;
  color: #8a8a8a;
  background: #dedede;
  border-right: 1px solid #cfcfcf;
  box-sizing: border-box;
}

.ptab--on {
  color: #222;
  background: #f0f0f0;
  border-right: none;
}

.ptools {
  height: 29px;
  flex: none;
  box-sizing: border-box;
  background: #f0f0f0;
  border-bottom: 1px solid #d4d4d4;
  display: flex;
  align-items: center;
  gap: 15px;
  padding-left: 3px;
  position: relative;
}

.ptool {
  display: flex;
  align-items: center;
  gap: 3px;
  color: #333;
}

.ptool .caret {
  margin-left: 2px;
  margin-right: -3px;
}

.pmore {
  position: absolute;
  right: 3px;
  top: 12px;
  border-left: 3px solid #777;
  border-top: 3px solid transparent;
  border-bottom: 3px solid transparent;
  width: 3px;
  height: 0;
  box-shadow: 4px 0 0 -0.5px #777;
}

.psearch {
  height: 19px;
  flex: none;
  box-sizing: border-box;
  background: #fff;
  border-bottom: 1px solid #cfcfcf;
  padding: 0 5px 0 1px;
  color: #999;
  display: flex;
  align-items: center;
  justify-content: space-between;
}

.ptree {
  flex: 1;
  padding-top: 1px;
}

.pt-root {
  height: 21px;
  line-height: 23px;
  padding-left: 23px;
  position: relative;
}

.pt-root i {
  position: absolute;
  left: 10px;
  top: 8px;
  border-left: 5px solid transparent;
  border-bottom: 5px solid #444;
}

.pt-leaf {
  padding-left: 39px;
  height: 21px;
}

.pt-leaf span {
  display: inline-block;
  padding: 0 4px;
  line-height: 21px;
  background: #c5d5ea;
}

/* 属性表 */
.props {
  height: 268px;
  flex: none;
  display: flex;
  overflow: hidden;
  background: #fff;
}

.table {
  width: 281px;
  flex: none;
}

.tr {
  display: grid;
  grid-template-columns: 22px 130px 129px;
  height: 21px;
}

.tr--head {
  height: 20px;
}

.cell {
  display: flex;
  align-items: center;
  box-sizing: border-box;
  border-bottom: 1px solid #cacaca;
  white-space: nowrap;
  position: relative;
}

.cell--no {
  justify-content: center;
  background: #f0f0f0;
  color: #444;
}

.cell--blank {
  background: #fff;
  border-bottom-color: #f0f0f0;
}

.cell--cur {
  background: #66aef0;
  color: #fff;
  font-weight: 700;
}

.cell--hname {
  justify-content: center;
  background: #f0f0f0;
  color: #333;
  border-right: 1px solid #cacaca;
}

.cell--hval {
  justify-content: center;
  padding-left: 14px;
  background: #66aef0;
  color: #fff;
  font-weight: 700;
}

.cell--name {
  padding-left: 2px;
  border-right: 1px solid #cacaca;
}

.is-blue {
  color: #2a6cc8;
}

.has-box {
  padding-left: 1px;
}

.is-child {
  padding-left: 29px;
}

.box {
  width: 12px;
  height: 12px;
  margin-right: 6px;
  box-sizing: border-box;
  border: 1px solid #999;
  border-radius: 2px;
  line-height: 9px;
  text-align: center;
  color: #333;
  font-size: 12px;
  display: inline-block;
  background: #fff;
  position: relative;
  z-index: 1;
}

.is-open::after,
.is-child::before {
  content: "";
  position: absolute;
  left: 7px;
  width: 1px;
  background: #bbb;
}

.is-open::after {
  top: 15px;
  bottom: -1px;
}

.is-child::before {
  top: 0;
  bottom: -1px;
}

.is-last::before {
  bottom: 10px;
}

.is-child::after {
  content: "";
  position: absolute;
  left: 8px;
  width: 18px;
  top: 10px;
  height: 1px;
  background: #bbb;
}

.cell--val {
  padding-left: 3px;
}

.is-shade {
  background: #eee;
}

.is-dim {
  color: #999;
}

.is-edit {
  border: 2px solid #666;
  border-left-width: 1px;
  border-right: none;
  padding-left: 3px;
}

.swatch {
  position: absolute;
  left: 9px;
  right: 0;
  top: 5px;
  height: 10px;
  background: #e33e92;
}

.vbar {
  width: 14px;
  flex: none;
  background: #fff;
  display: flex;
  flex-direction: column;
  align-items: center;
  position: relative;
}

.arr {
  position: absolute;
  width: 0;
  height: 0;
}

.arr--up {
  top: 3px;
  border-left: 4px solid transparent;
  border-right: 4px solid transparent;
  border-bottom: 4px solid #333;
}

.arr--down {
  bottom: 4px;
  border-left: 4px solid transparent;
  border-right: 4px solid transparent;
  border-top: 4px solid #333;
}

.arr--left {
  left: 1px;
  top: 2px;
  border-top: 4px solid transparent;
  border-bottom: 4px solid transparent;
  border-right: 4px solid #333;
}

.arr--right {
  right: 18px;
  top: 2px;
  border-top: 4px solid transparent;
  border-bottom: 4px solid transparent;
  border-left: 4px solid #333;
}

.vthumb {
  width: 9px;
  height: 228px;
  margin-top: 9px;
  background: #c8c8c8;
  border-radius: 4px;
}

.hbar {
  height: 13px;
  flex: none;
  position: relative;
  background: #fff;
  padding-left: 8px;
  box-sizing: border-box;
}

.hthumb {
  display: block;
  width: 219px;
  height: 8px;
  margin-top: 2px;
  background: #c8c8c8;
  border-radius: 4px;
}

.gutter {
  width: 4px;
  flex: none;
  padding-top: 214px;
  box-sizing: border-box;
}

.handle {
  display: block;
  height: 101px;
  background: #4d5560;
}

/* 三维视图 */
.canvas {
  flex: 1;
  min-width: 0;
  background: #000;
  position: relative;
  overflow: hidden;
}

.scene {
  display: block;
  width: 890px;
  height: 529px;
}

.mark {
  fill: #fff;
  font-size: 17px;
  text-anchor: middle;
  font-family: "Liberation Sans", sans-serif;
}

.axis {
  font-size: 15px;
  text-anchor: middle;
  font-family: "Liberation Sans", sans-serif;
}

.axis--z { fill: #2020ff; }
.axis--y { fill: #1fd41f; }
.axis--x { fill: #f01414; }

.bar-text {
  fill: #2b3036;
  font-size: 10px;
  text-anchor: end;
  font-family: "Liberation Sans", sans-serif;
}

.viewbar {
  position: absolute;
  right: 0;
  top: 0;
  width: 32px;
  height: 238px;
  background: rgba(78, 78, 78, 0.92);
  border-radius: 0 0 0 4px;
}

.viewbar svg {
  display: block;
}

/* 底部页签 */
.bottom {
  height: 8px;
  flex: none;
  box-sizing: border-box;
  padding: 3px 0 0 604px;
  display: flex;
  gap: 4px;
  background: #e4e4e4;
  overflow: hidden;
}

.btab {
  height: 12px;
  box-sizing: border-box;
  border: 1px solid #aaa;
  background: #dcdcdc;
  position: relative;
}

.btab--on {
  background: #fff;
  border-color: #6ba5de;
}

.btab--on::after {
  content: "";
  position: absolute;
  left: 3px;
  top: 2px;
  width: 6px;
  height: 4px;
  background: #e88f3a;
}
</style>
